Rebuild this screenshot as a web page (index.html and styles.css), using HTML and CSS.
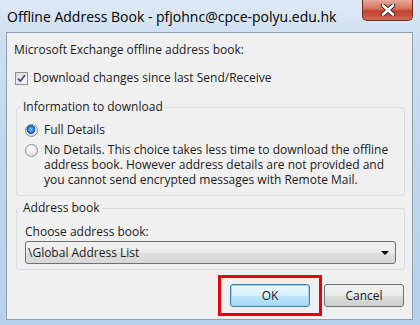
FILE: index.html
```html
<!DOCTYPE html>
<html>
  <head>
    <title>Offline Address Book</title>
    <meta charset="utf-8" />
    <link rel="stylesheet" href="styles.css">
  </head>
  <body>

    <div class="janela">
      <div class="barra-titulo">
        <span class="titulo">Offline Address Book - pfjohnc@cpce-polyu.edu.hk</span>
        <button type="button" class="fechar">
          <svg width="16" height="12" viewBox="0 0 16 12">
            <path d="M3 1.5 L13 10.5 M13 1.5 L3 10.5" stroke="#3b2a2a" stroke-width="4.6" stroke-linecap="round"/>
            <path d="M3 1.5 L13 10.5 M13 1.5 L3 10.5" stroke="#ffffff" stroke-width="2.6" stroke-linecap="round"/>
          </svg>
        </button>
      </div>

      <div class="conteudo">
        <p class="rotulo-topo">Microsoft Exchange offline address book:</p>
        <div class="opcao opcao-download">
          <span class="caixa-marcar">
            <svg width="9" height="9" viewBox="0 0 9 9">
              <path d="M1 4.6 L3.4 7.2 L8 1" fill="none" stroke="#3c5289" stroke-width="1.7"/>
            </svg>
          </span>
          <span>Download changes since last Send/Receive</span>
        </div>

        <fieldset class="grupo grupo-info">
          <legend>Information to download</legend>
          <div class="opcao">
            <span class="radio marcado"></span>
            <span>Full Details</span>
          </div>
          <div class="opcao opcao-longa">
            <span class="radio"></span>
            <span>No Details. This choice takes less time to download the offline address book. However address details are not provided and you cannot send encrypted messages with Remote Mail.</span>
          </div>
        </fieldset>

        <fieldset class="grupo grupo-livro">
          <legend>Address book</legend>
          <p class="rotulo-combo">Choose address book:</p>
          <div class="combo">
            <span>\Global Address List</span>
            <span class="seta"></span>
          </div>
        </fieldset>

        <div class="botoes">
          <div class="destaque">
            <button type="button" class="botao botao-ok">OK</button>
          </div>
          <button type="button" class="botao">Cancel</button>
        </div>
      </div>
    </div>

  </body>
</html>
```

FILE: styles.css
```css
body {
    margin: 0;
    background-color: #c3d7ed;
    font-family: "Open Sans", "Noto Sans", sans-serif;
}

.janela {
    width: 420px;
    height: 325px;
    box-sizing: border-box;
    padding: 0 7px 5px 6px;
    display: flex;
    flex-direction: column;
    background: linear-gradient(to bottom, #dfe9f5 0%, #cddff1 12%, #bdd4ec 60%, #b7d0ea 100%);
}

.barra-titulo {
    height: 32px;
    display: flex;
    justify-content: space-between;
    align-items: flex-start;
}

.titulo {
    margin: 7px 0 0 1px;
    font-size: 14px;
    color: #000;
}

.fechar {
    width: 51px;
    height: 21px;
    padding: 0;
    display: flex;
    align-items: center;
    justify-content: center;
    border: 1px solid #6c2b21;
    border-top: none;
    border-radius: 0 0 5px 5px;
    background: linear-gradient(to bottom, #e6a99b 0%, #d66f5a 45%, #c3412c 55%, #cf6a52 100%);
}

.conteudo {
    flex: 1;
    background-color: #f0f0f0;
    border: 1px solid #8d9eb3;
    padding: 0 7px 0 7px;
    font-size: 12px;
    color: #1b1b1b;
    line-height: 16px;
}

.rotulo-topo {
    margin: 9px 0 0 0;
}

.opcao {
    display: flex;
    align-items: flex-start;
}

.opcao-download {
    margin-top: 12px;
    margin-left: 1px;
}

.caixa-marcar {
    width: 11px;
    height: 11px;
    margin: 2px 5px 0 0;
    border: 1px solid #8e8f8f;
    background: linear-gradient(135deg, #dcdcdc, #fbfbfb);
    display: flex;
    align-items: center;
    justify-content: center;
}

.grupo {
    margin: 13px 0 0 2px;
    border: 1px solid #d5dfe5;
    border-radius: 3px;
    min-width: 0;
}

.grupo legend {
    padding: 0 2px;
    margin-left: -4px;
}

.grupo-info {
    padding: 7px 8px 8px 8px;
}

.grupo-info .opcao + .opcao {
    margin-top: 4px;
}

.radio {
    flex: none;
    width: 11px;
    height: 11px;
    margin: 2px 6px 0 0;
    border: 1px solid #8e8f8f;
    border-radius: 50%;
    background: radial-gradient(circle at 40% 35%, #ffffff, #d8d8d8);
}

.radio.marcado {
    background: radial-gradient(circle at 45% 40%, #8fd0ff 0, #2a8ae0 28%, #0e4f9e 48%, #e9e9e9 52%, #cfcfcf 100%);
}

.opcao-longa span:last-child {
    line-height: 15px;
}

.grupo-livro {
    margin-top: 4px;
    padding: 8px 8px 5px 8px;
}

.rotulo-combo {
    margin: 0;
}

.combo {
    margin-top: 1px;
    height: 21px;
    border: 1px solid #707070;
    border-radius: 3px;
    background: linear-gradient(to bottom, #f3f3f3 0%, #ebebeb 50%, #dfdfdf 51%, #d8d8d8 100%);
    display: flex;
    align-items: center;
    justify-content: space-between;
    padding: 0 6px 0 2px;
}

.seta {
    width: 0;
    height: 0;
    border-left: 4px solid transparent;
    border-right: 4px solid transparent;
    border-top: 4px solid #000;
}

.botoes {
    margin-top: 5px;
    display: flex;
    justify-content: flex-end;
    align-items: center;
    gap: 2px;
    padding-right: 1px;
}

.destaque {
    border: 3px solid #e8000b;
    padding: 6px 9px;
}

.botao {
    width: 80px;
    height: 23px;
    padding: 0;
    font-family: inherit;
    font-size: 12px;
    color: #1b1b1b;
    border: 1px solid #707070;
    border-radius: 3px;
    background: linear-gradient(to bottom, #f2f2f2 0%, #ebebeb 50%, #dddddd 51%, #cfcfcf 100%);
}

.botao-ok {
    border-color: #3c7fb1;
    background: linear-gradient(to bottom, #eaf6fd 0%, #d9f0fc 50%, #bee6fd 51%, #a7d9f5 100%);
    box-shadow: inset 0 0 0 1px #9bd3f1;
}
```
